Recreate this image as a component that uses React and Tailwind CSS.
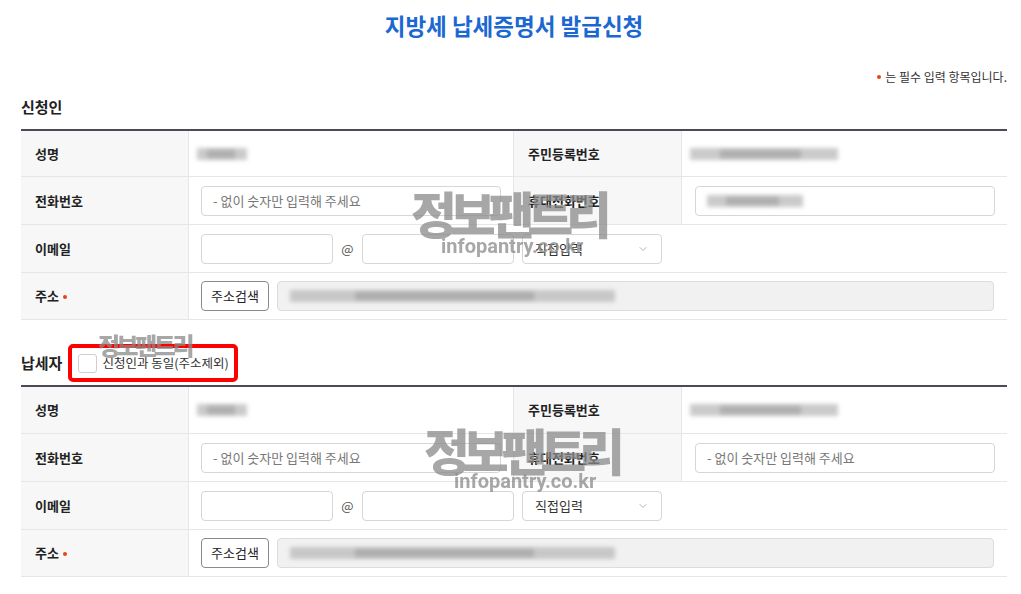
import React from "react";
import { ChevronDown } from "lucide-react";

const Dot = () => (
  <span className="inline-block w-[4px] h-[4px] rounded-full bg-[#e8431c] align-middle" />
);

const Blur = ({ w, className = "" }) => (
  <div className={`relative h-[16px] ${className}`} style={{ width: w }}>
    <div className="absolute inset-y-[2px] inset-x-0 bg-[#bdbdbd] blur-[2px] opacity-80" />
    <div className="absolute inset-y-[4px] left-[20%] right-[25%] bg-[#9d9d9d] blur-[2px] opacity-60" />
  </div>
);

const Label = ({ children, border }) => (
  <div
    className={`flex items-center bg-[#f7f7f7] pl-[14px] text-[13px] font-bold text-[#222] ${
      border ? "border-l border-[#e6e6e6]" : ""
    }`}
  >
    {children}
  </div>
);

const Input = ({ w, placeholder, children, className = "" }) => (
  <div
    className={`flex h-[30px] items-center rounded-[4px] border border-[#d6d6d6] bg-white pl-[11px] text-[13px] text-[#777] ${className}`}
    style={{ width: w }}
  >
    {placeholder}
    {children}
  </div>
);

function Table({ mobileFilled, topClass, firstRowClass }) {
  const row = "grid grid-cols-[167px_325px_168px_326px] h-[48px] border-b border-[#e6e6e6]";
  return (
    <div className={`border-t-2 border-[#4b4b55] ${topClass}`}>
      <div className={`grid grid-cols-[167px_325px_168px_326px] border-b border-[#e6e6e6] ${firstRowClass}`}>
        <Label>성명</Label>
        <div className="flex items-center border-l border-[#e6e6e6] pl-[8px]">
          <Blur w={50} />
        </div>
        <Label border>주민등록번호</Label>
        <div className="flex items-center border-l border-[#e6e6e6] pl-[8px]">
          <Blur w={148} />
        </div>
      </div>
      <div className={row}>
        <Label>전화번호</Label>
        <div className="flex items-center border-l border-[#e6e6e6] pl-[12px]">
          <Input w={300} placeholder="- 없이 숫자만 입력해 주세요" />
        </div>
        <Label border>휴대전화번호</Label>
        <div className="flex items-center border-l border-[#e6e6e6] pl-[13px]">
          {mobileFilled ? (
            <Input w={300}>
              <Blur w={96} />
            </Input>
          ) : (
            <Input w={300} placeholder="- 없이 숫자만 입력해 주세요" />
          )}
        </div>
      </div>
      <div className="grid grid-cols-[167px_819px] h-[48px] border-b border-[#e6e6e6]">
        <Label>이메일</Label>
        <div className="flex items-center border-l border-[#e6e6e6] pl-[12px]">
          <Input w={132} />
          <span className="w-[29px] text-center text-[13px] text-[#555]">@</span>
          <Input w={152} />
          <div className="ml-[8px] flex h-[30px] w-[140px] items-center justify-between rounded-[4px] border border-[#d6d6d6] bg-white pl-[12px] pr-[12px] text-[13px] text-[#333]">
            직접입력
            <ChevronDown size={12} color="#9a9a9a" strokeWidth={1.5} />
          </div>
        </div>
      </div>
      <div className="grid grid-cols-[167px_819px] h-[47px] border-b border-[#e6e6e6]">
        <Label>
          주소<span className="ml-[4px] mt-[2px] flex"><Dot /></span>
        </Label>
        <div className="flex items-center border-l border-[#e6e6e6] pl-[12px]">
          <div className="flex h-[30px] w-[68px] items-center justify-center rounded-[4px] border border-[#8a8a8a] bg-white text-[13px] text-[#222]">
            주소검색
          </div>
          <div className="ml-[8px] flex h-[30px] w-[717px] items-center rounded-[4px] border border-[#dcdcdc] bg-[#f1f1f1] pl-[12px]">
            <Blur w={325} />
          </div>
        </div>
      </div>
    </div>
  );
}

const Watermark = ({ left, top, big, small, urlLeft, urlTop }) => (
  <>
    <div
      className="pointer-events-none absolute whitespace-nowrap font-black text-[#8a8a8a] opacity-75 leading-none"
      style={{ left, top, fontSize: big, letterSpacing: -big * 0.145 }}
    >
      정보팬트리
    </div>
    {small && (
      <div
        className="pointer-events-none absolute whitespace-nowrap font-['Roboto',sans-serif] font-bold text-[#8a8a8a] opacity-75 leading-none"
        style={{ left: urlLeft, top: urlTop, fontSize: small }}
      >
        infopantry.co.kr
      </div>
    )}
  </>
);

export default function App() {
  return (
    <div className="relative w-[1021px] h-[594px] overflow-hidden bg-white font-['Noto_Sans_CJK_KR','Noto_Sans',sans-serif]">
      <div className="ml-[21px] w-[986px]">
        <h1 className="mt-[10px] h-[30px] text-center text-[22.5px] font-bold leading-[30px] text-[#1b68d2]">
          지방세 납세증명서 발급신청
        </h1>
        <div className="mt-[28px] flex items-center justify-end gap-[4px] text-[12px] leading-[18px] text-[#333]">
          <Dot />는 필수 입력 항목입니다.
        </div>
        <h2 className="mt-[10px] text-[15px] font-bold leading-[22px] text-[#222]">신청인</h2>
        <Table mobileFilled topClass="mt-[11px]" firstRowClass="h-[46px]" />

        <div className="mt-[24px] flex h-[38px] items-center">
          <h2 className="text-[15px] font-bold leading-[22px] text-[#222]">납세자</h2>
          <div className="ml-[6px] flex h-[38px] items-center rounded-[5px] border-[4px] border-[#ff0000] pl-[6px] pr-[5px]">
            <div className="h-[19px] w-[19px] rounded-[3px] border border-[#cfcfcf] bg-white" />
            <span className="ml-[5px] text-[12.5px] text-[#333]">신청인과 동일(주소제외)</span>
          </div>
        </div>
        <Table topClass="mt-[3px]" firstRowClass="h-[47px]" />
      </div>

      <Watermark left={411} top={187} big={50} small={20} urlLeft={441} urlTop={236} />
      <Watermark left={424} top={424} big={50} small={20} urlLeft={454} urlTop={471} />
      <Watermark left={98} top={333} big={24} />
    </div>
  );
}
